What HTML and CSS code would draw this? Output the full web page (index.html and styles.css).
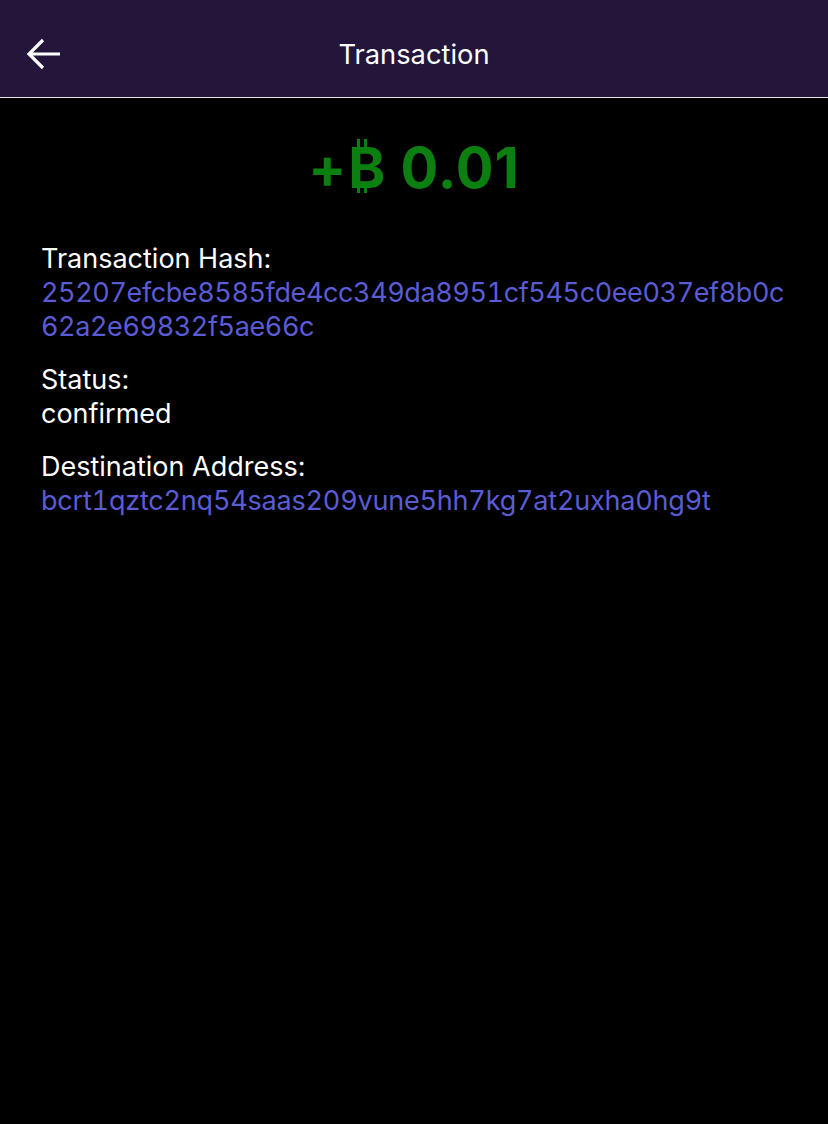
FILE: index.html
```html
<!DOCTYPE html>
<html>
<head>
<meta charset="utf-8">
<link rel="stylesheet" href="styles.css">
</head>
<body>
<header class="nav">
  <button class="back" aria-label="Back">
    <svg width="34" height="32" viewBox="0 0 34 32"><path d="M16 2 L2 16 L16 30 M2 16 H33" fill="none" stroke="#fff" stroke-width="3.2" stroke-linecap="butt" stroke-linejoin="miter"/></svg>
  </button>
  <h1 class="title">Transaction</h1>
</header>
<main class="content">
  <div class="amount">+<span class="btc">B</span> 0.01</div>
  <section class="field">
    <div class="label">Transaction Hash:</div>
    <div class="value link hash">25207efcbe8585fde4cc349da8951cf545c0ee037ef8b0c62a2e69832f5ae66c</div>
  </section>
  <section class="field">
    <div class="label">Status:</div>
    <div class="value">confirmed</div>
  </section>
  <section class="field">
    <div class="label">Destination Address:</div>
    <div class="value link addr">bcrt1qztc2nq54saas209vune5hh7kg7at2uxha0hg9t</div>
  </section>
</main>
</body>
</html>
```
FILE: styles.css
```css
html, body {
  margin: 0;
  padding: 0;
  background: #000;
  height: 100%;
}
body {
  font-family: Inter, "Noto Sans", sans-serif;
  color: #fff;
}
.nav {
  position: relative;
  height: 97px;
  background: #24153a;
  border-bottom: 1px solid #e6e6e6;
  display: flex;
  align-items: center;
  justify-content: center;
}
.back {
  position: absolute;
  left: 27px;
  top: 38px;
  background: none;
  border: 0;
  padding: 0;
  display: flex;
}
.title {
  margin: 0;
  font-size: 27.3px;
  font-weight: 400;
  padding-top: 12px;
}
.content {
  padding: 0 41px;
}
.amount {
  text-align: center;
  color: #0b8010;
  font-size: 56px;
  font-weight: 700;
  line-height: 68px;
  letter-spacing: 1px;
  margin-top: 36px;
  margin-bottom: 40px;
}
.btc {
  position: relative;
  display: inline-block;
  margin-left: 1px;
}
.btc::before,
.btc::after {
  content: "";
  position: absolute;
  left: 9px;
  width: 4px;
  border-left: 3.5px solid #0b8010;
  border-right: 3.5px solid #0b8010;
}
.btc::before { top: 5px; height: 8px; }
.btc::after { top: 52px; height: 7px; }
.field {
  margin-bottom: 19px;
  font-size: 27px;
  line-height: 34px;
}
.link {
  color: #5a5cd6;
  word-break: break-all;
  font-feature-settings: "tnum" 1;
}
.hash { letter-spacing: -0.4px; }
.addr { letter-spacing: -0.2px; }
```
